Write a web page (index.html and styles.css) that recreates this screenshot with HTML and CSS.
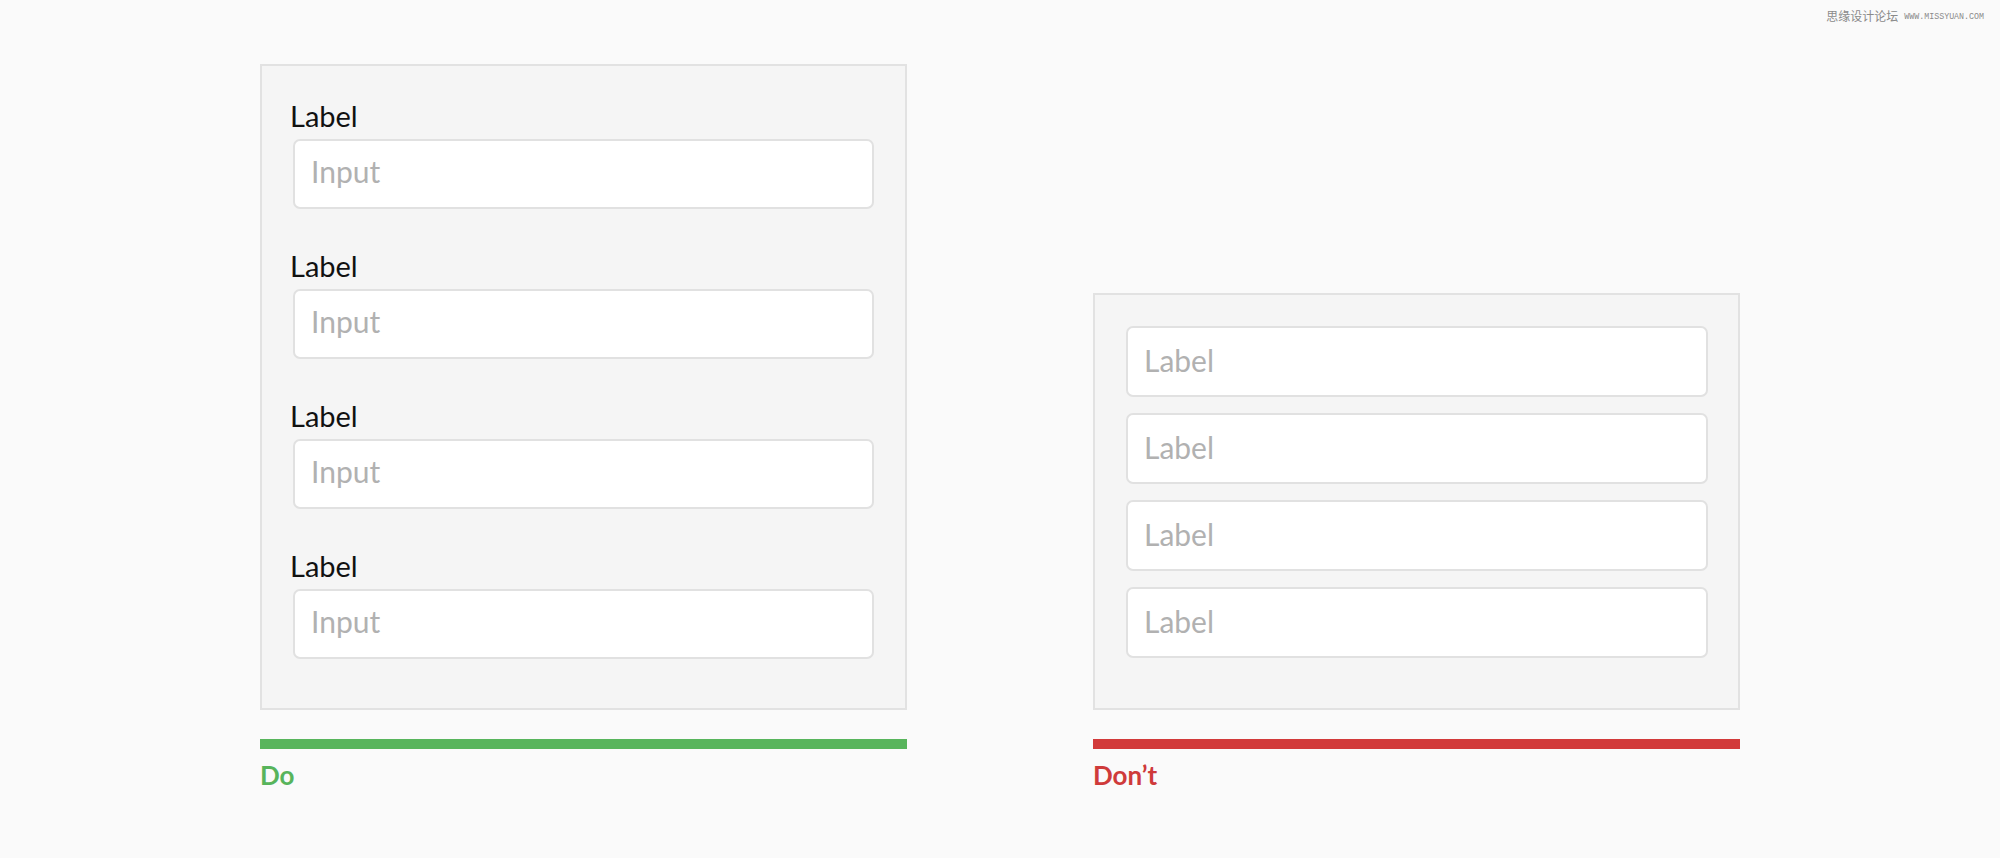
FILE: index.html
```html
<!DOCTYPE html>
<html lang="en">
<head>
<meta charset="utf-8">
<title>Do / Don't</title>
<link rel="stylesheet" href="styles.css">
</head>
<body>
<div class="watermark"><span class="wm-cn">思缘设计论坛</span><span class="wm-url">WWW.MISSYUAN.COM</span></div>
<main class="examples">
  <section class="example">
    <div class="panel panel-do">
      <div class="field">
        <div class="label">Label</div>
        <div class="input">Input</div>
      </div>
      <div class="field">
        <div class="label">Label</div>
        <div class="input">Input</div>
      </div>
      <div class="field">
        <div class="label">Label</div>
        <div class="input">Input</div>
      </div>
      <div class="field">
        <div class="label">Label</div>
        <div class="input">Input</div>
      </div>
    </div>
    <div class="bar bar-do"></div>
    <div class="caption caption-do">Do</div>
  </section>
  <section class="example">
    <div class="panel panel-dont">
      <div class="input">Label</div>
      <div class="input">Label</div>
      <div class="input">Label</div>
      <div class="input">Label</div>
    </div>
    <div class="bar bar-dont"></div>
    <div class="caption caption-dont">Don’t</div>
  </section>
</main>
</body>
</html>
```
FILE: styles.css
```css
html, body {
  margin: 0;
  padding: 0;
}
body {
  background: #fafafa;
  font-family: Lato, "Open Sans", sans-serif;
  width: 2000px;
  height: 858px;
  overflow: hidden;
  position: relative;
}
.watermark {
  position: absolute;
  top: 6px;
  right: 16px;
  display: flex;
  align-items: center;
  gap: 6px;
  color: #8a8a8a;
}
.wm-cn {
  font-family: "Noto Sans CJK SC", sans-serif;
  font-size: 12px;
  line-height: 18px;
}
.wm-url {
  font-family: "Liberation Mono", monospace;
  font-size: 8.3px;
  line-height: 18px;
  padding-top: 2px;
}
.examples {
  display: flex;
  align-items: flex-end;
  gap: 186px;
  padding: 64px 0 0 260px;
}
.example {
  width: 647px;
  display: flex;
  flex-direction: column;
}
.panel {
  box-sizing: border-box;
  background: #f5f5f5;
  border: 2px solid #e2e2e2;
  display: flex;
  flex-direction: column;
}
.panel-do {
  padding: 33px 31px 49px 31px;
  gap: 40px;
}
.panel-dont {
  padding: 31px 30px 50px 31px;
  gap: 16px;
}
.field {
  display: flex;
  flex-direction: column;
}
.label {
  font-size: 29px;
  line-height: 34px;
  color: #111;
  margin-left: -3px;
  margin-bottom: 6px;
}
.input {
  box-sizing: border-box;
  height: 70px;
  background: #fff;
  border: 2px solid #e1e1e1;
  border-radius: 7px;
  display: flex;
  align-items: center;
  padding: 0 16px 6px 16px;
  font-size: 30px;
  color: #b1b1b1;
}
.panel-dont .input {
  height: 71px;
  padding-bottom: 4px;
}
.bar {
  height: 10px;
  margin-top: 29px;
}
.bar-do { background: #58b55c; }
.bar-dont { background: #d23a3a; }
.caption {
  margin-top: 11px;
  font-size: 26px;
  font-weight: 700;
  line-height: 31px;
}
.caption-do { color: #57b45b; }
.caption-dont { color: #cf3a3a; }
```
